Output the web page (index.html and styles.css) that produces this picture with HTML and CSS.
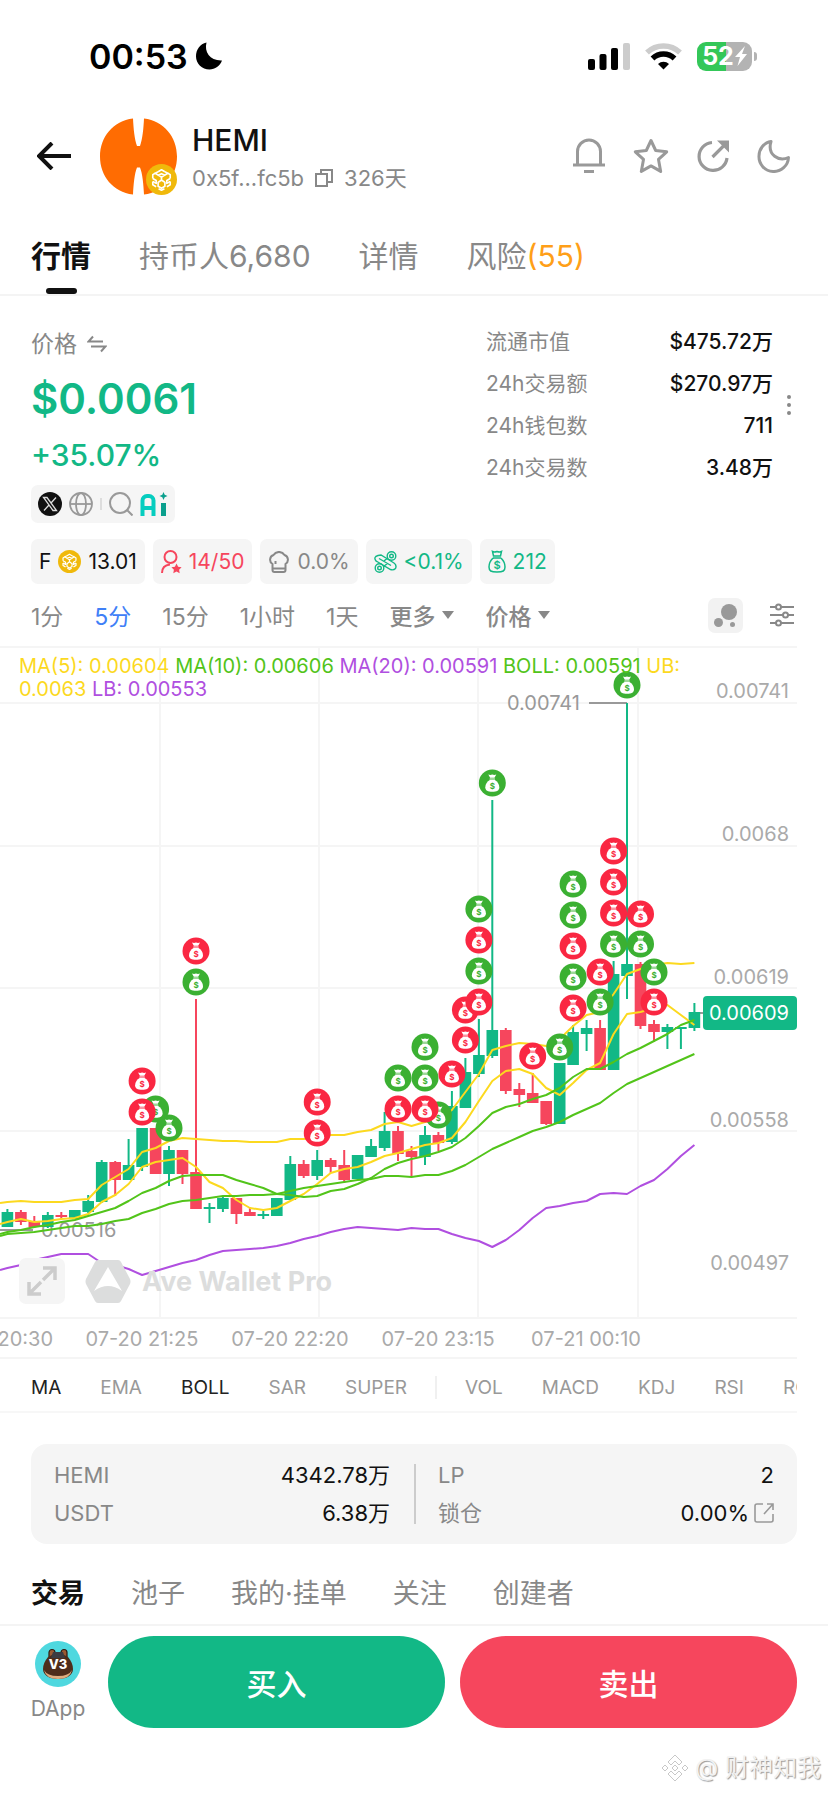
FILE: index.html
```html
<!DOCTYPE html>
<html lang="zh-CN">
<head>
  <meta charset="UTF-8" />
  <meta name="viewport" content="width=device-width, initial-scale=1.0"/>
  <title>HEMI | Ave Wallet Pro</title>
  <link rel="stylesheet" href="styles.css">
</head>
<body>
  <!-- Shared icons -->
  <svg class="sprite" aria-hidden="true">
    <symbol id="bnb" viewBox="0 0 32 32">
      <circle cx="16" cy="16" r="16" fill="#f0b90b"/>
      <g fill="none" stroke="#fff" stroke-width="1.700" stroke-linejoin="round">
        <path d="M12.500 8L16 6l3.500 2M9.500 9.500L7 11v4M22.500 9.500L25 11v4M7 18v3.500l3.500 2M25 18v3.500l-3.500 2M13 25.500l3 1.500 3-1.500"/>
        <path d="M12.500 8L9.500 9.500l3 2 3.500-1.500 3.500 1.500 3-2L19.500 8M12.500 11.500l3.500 2 3.500-2"/>
        <path d="M7 15l3.500 2v3L7 18M25 15l-3.500 2v3l3.500-2M16 13.500v3M12.500 19l3.500-2.500 3.500 2.500v4L16 25l-3.500-2z"/>
      </g>
    </symbol>
    <symbol id="bag" viewBox="-14 -14 28 28">
      <circle r="13.500" fill="currentColor"/>
      <path d="M-4-8.500q2 .8 4 0 2 .8 4 0l-1.800 3.300h-4.400z" fill="#fff"/>
      <rect x="-2.800" y="-4.600" width="5.600" height="1.200" rx=".6" fill="#fff"/>
      <path d="M-2.500-2.900h5C5-1.500 7 1.200 7 4.200 7 7.500 4.500 8.800 0 8.800S-7 7.500-7 4.200c0-3 2-5.700 4.500-7.100z" fill="#fff"/>
      <text y="6" font-size="8" font-weight="700" text-anchor="middle" fill="currentColor">$</text>
    </symbol>
  </svg>

  <!-- Status bar -->
  <div class="status">
    <div class="clock">
      <span>00:53</span>
      <svg width="27" height="28" viewBox="0 0 27 28"><path d="M10.500.5C8 10 14 19 26 18.500 24 24 19 27.500 13.500 27.500 6 27.500 0 21.500 0 14.500 0 7.500 4 2 10.500.5z"/></svg>
    </div>
    <div class="signals">
      <svg width="42" height="27" viewBox="0 0 42 27">
        <rect y="16" width="7" height="11" rx="2"/>
        <rect x="11.500" y="11" width="7" height="16" rx="2"/>
        <rect x="23" y="5" width="7" height="22" rx="2"/>
        <rect x="35" width="7" height="27" rx="2" fill="#ccc"/>
      </svg>
      <svg width="37" height="27" viewBox="0 0 37 27">
        <path d="M2 9.500a24 24 0 0 1 33 0" fill="none" stroke="#ccc" stroke-width="5.500"/>
        <path d="M7.500 15.500a16 16 0 0 1 22 0" fill="none" stroke="#000" stroke-width="5.500"/>
        <path d="M18.500 26.500l-5.500-5.500a8 8 0 0 1 11 0z"/>
      </svg>
      <div class="battery">
        <span class="battery-level">52<svg width="12" height="20" viewBox="0 0 12 20"><path d="M10 0L0 11h5L2.500 20 12 8H7z" fill="#fff"/></svg></span>
        <span class="battery-cap"></span>
      </div>
    </div>
  </div>

  <!-- Token header -->
  <header class="token-header">
    <a class="back" href="#" aria-label="返回">
      <svg width="34" height="28" viewBox="0 0 34 28"><path d="M34 14H2M15 1L2 14l13 13" fill="none" stroke="#111" stroke-width="4"/></svg>
    </a>
    <div class="avatar">
      <svg width="77" height="77" viewBox="0 0 77 77">
        <path d="M33 .5C13 3 0 19 0 38.500S13 74 33 76.500c.5-10 1.500-21 4-27h3c2.500 6 3.500 17 4 27C64 74 77 58 77 38.500S64 3 44 .5c-.5 10-1.500 21-4 27.500h-3c-2.500-6.500-3.500-17.500-4-27.500z" fill="#ff6c02"/>
      </svg>
      <svg class="avatar-chain" width="31" height="31"><use href="#bnb"/></svg>
    </div>
    <div class="token-info">
      <h1>HEMI</h1>
      <div class="token-sub">
        <span>0x5f...fc5b</span>
        <svg width="18" height="18" viewBox="0 0 18 18"><path d="M1 5h11v12H1zM6 5V1h11v12h-5" fill="none" stroke="#888" stroke-width="2"/></svg>
        <span>326天</span>
      </div>
    </div>
    <div class="actions">
      <button aria-label="提醒"><svg width="34" height="36" viewBox="0 0 34 36"><path d="M5.500 26V13.500a11.500 11.500 0 0 1 23 0V26M1 27h32M12 33.500h10" fill="none" stroke="#999" stroke-width="3"/></svg></button>
      <button aria-label="收藏"><svg width="36" height="36" viewBox="0 0 36 36"><path d="M18 2.500l4.700 10 11 1.300-8.200 7.600 2.200 12-9.700-5.500-9.700 5.500 2.200-12-8.200-7.600 11-1.300z" fill="none" stroke="#999" stroke-width="3" stroke-linejoin="round"/></svg></button>
      <button aria-label="分享"><svg width="34" height="34" viewBox="0 0 34 34"><path d="M16 3.500A14 14 0 1 0 31 19M16.500 18L29 5.500" fill="none" stroke="#999" stroke-width="3.200"/><path d="M21 1.500h12v12z" fill="#999"/></svg></button>
      <button aria-label="夜间模式"><svg width="34" height="34" viewBox="0 0 34 34"><path d="M14 2.500C7 3.500 2 10 2 17a14.500 14.500 0 0 0 29.500 1.500C22 23 10 16 14 2.500z" fill="none" stroke="#999" stroke-width="3" stroke-linejoin="round"/></svg></button>
    </div>
  </header>

  <nav class="tabs">
    <a class="active" href="#">行情</a>
    <a href="#">持币人6,680</a>
    <a href="#">详情</a>
    <a href="#">风险<span class="risk">(55)</span></a>
  </nav>

  <!-- Price and stats -->
  <section class="overview">
    <div class="price-box">
      <div class="price-label">价格
        <svg width="20" height="18" viewBox="0 0 20 18"><path d="M6 1.500L1.500 6.500H16M4 11.500h14.500L14 16.500" fill="none" stroke="#888" stroke-width="2"/></svg>
      </div>
      <div class="price">$0.0061</div>
      <div class="change">+35.07%</div>
      <div class="social">
        <svg width="24" height="24" viewBox="0 0 24 24"><circle cx="12" cy="12" r="12" fill="#111"/><path d="M5.500 5.500h3.500l9.500 13H15zM18 5.500l-5.200 5.700M11 13l-5 5.500" fill="none" stroke="#ddd" stroke-width="1.300"/></svg>
        <svg width="24" height="24" viewBox="0 0 24 24"><g fill="none" stroke="#999" stroke-width="1.800"><circle cx="12" cy="12" r="11"/><ellipse cx="12" cy="12" rx="5" ry="11"/><path d="M1 12h22"/></g></svg>
        <span class="bar"></span>
        <svg width="24" height="24" viewBox="0 0 24 24"><g fill="none" stroke="#999" stroke-width="2"><circle cx="11" cy="11" r="10"/><path d="M17.500 17.500l6 6"/></g></svg>
        <svg width="28" height="24" viewBox="0 0 28 24"><path d="M2.500 24V8.500a4.500 4.500 0 0 1 4.500-4.500h2a4.500 4.500 0 0 1 4.500 4.500V24M3 16h10" fill="none" stroke="#06cdbf" stroke-width="4"/><path d="M21 11h5v13h-5z" fill="#0a9f8d"/><path d="M23.500 0l1.200 2.800 2.800 1.200-2.800 1.200-1.200 2.800-1.200-2.800-2.800-1.200 2.800-1.200z" fill="#0a9f8d"/></svg>
      </div>
    </div>
    <dl class="stats">
      <div><dt>流通市值</dt><dd>$475.72万</dd></div>
      <div><dt>24h交易额</dt><dd>$270.97万</dd></div>
      <div><dt>24h钱包数</dt><dd>711</dd></div>
      <div><dt>24h交易数</dt><dd>3.48万</dd></div>
    </dl>
    <button class="more" aria-label="更多数据"><svg width="4" height="20" viewBox="0 0 4 20"><g fill="#888"><circle cx="2" cy="2" r="2"/><circle cx="2" cy="10" r="2"/><circle cx="2" cy="18" r="2"/></g></svg></button>
  </section>

  <div class="chips">
    <div class="chip">F <svg width="23" height="23"><use href="#bnb"/></svg> 13.01</div>
    <div class="chip red">
      <svg width="21" height="24" viewBox="0 0 21 24"><g fill="none" stroke="currentColor" stroke-width="2"><circle cx="9.500" cy="7" r="6"/><path d="M1 23c0-5 3-8 8-8.500"/></g><path d="M15.500 13.500l1.600 3.200 3.500.5-2.500 2.500.6 3.600-3.200-1.700-3.200 1.700.6-3.600-2.500-2.500 3.500-.5z" fill="currentColor"/></svg>
      14/50
    </div>
    <div class="chip gray">
      <svg width="22" height="22" viewBox="0 0 22 22"><g fill="none" stroke="currentColor" stroke-width="2"><path d="M4.500 13A5 5 0 0 1 5.500 4 6.500 6.500 0 0 1 16.500 4a5 5 0 0 1 1 9v6q0 2-2 2h-9q-2 0-2-2zM4.500 17.500h13M7.500 13v-3"/></g></svg>
      0.0%
    </div>
    <div class="chip green">
      <svg width="23" height="22" viewBox="0 0 23 22"><g fill="none" stroke="currentColor" stroke-width="1.400"><circle cx="17.500" cy="5" r="4.300"/><circle cx="17.500" cy="5" r="1.800"/><circle cx="5.500" cy="17" r="4.300"/><circle cx="5.500" cy="17" r="1.800"/><path d="M2 10Q-1 6 4 4.500l3-.5 13 8q3 2 1.500 5.500-2 2-5 1L3 10.500zM13.500 7L10 10M9.500 15.500l4-3M5 7.500l12 7"/></g></svg>
      &lt;0.1%
    </div>
    <div class="chip green">
      <svg width="18" height="23" viewBox="0 0 18 23"><path d="M4.500 1.500q2 1 4.500 0 2.500 1 4.500 0l-1 4.500h-7zM5 8h8M5 8C2 11 1 14 1 17c0 4 2 5 8 5s8-1 8-5c0-3-1-6-4-9" fill="none" stroke="currentColor" stroke-width="1.500"/><text x="9" y="19" font-size="11" font-weight="600" text-anchor="middle" fill="currentColor">$</text></svg>
      212
    </div>
  </div>

  <!-- Timeframes -->
  <div class="frames">
    <button>1分</button>
    <button class="selected">5分</button>
    <button>15分</button>
    <button>1小时</button>
    <button>1天</button>
    <button class="drop">更多</button>
    <button class="drop">价格</button>
    <span class="frame-tools">
      <button class="bubble" aria-label="气泡"><svg width="23" height="23" viewBox="0 0 23 23"><g fill="#999"><circle cx="15" cy="8" r="8"/><circle cx="4.500" cy="18.500" r="4.500"/><circle cx="18.500" cy="20.500" r="2.500"/></g></svg></button>
      <button aria-label="设置"><svg width="24" height="24" viewBox="0 0 24 24"><g fill="#fff" stroke="#888" stroke-width="2"><path d="M0 4h24M0 12h24M0 20h24"/><circle cx="8.500" cy="4" r="2.500"/><circle cx="15.500" cy="12" r="2.500"/><circle cx="8.500" cy="20" r="2.500"/></g></svg></button>
    </span>
  </div>

  <!-- Chart -->
  <section class="chart">
    <svg id="chart" class="chart-svg" viewBox="0 0 797 713"></svg>
    <p class="legend">
      <span class="ma5">MA(5): 0.00604</span>
      <span class="ma10">MA(10): 0.00606</span>
      <span class="ma20">MA(20): 0.00591</span>
      <span class="ma10">BOLL: 0.00591</span>
      <span class="ma5">UB: 0.0063</span>
      <span class="ma20">LB: 0.00553</span>
    </p>
    <div class="brand">
      <button class="expand" aria-label="全屏"><svg width="30" height="30" viewBox="0 0 30 30"><path d="M16 2h12v12M28 2L16 14M2 16v12h12M2 28l12-12" fill="none" stroke="#ccc" stroke-width="3.500"/></svg></button>
      <svg width="46" height="43" viewBox="0 0 46 43"><path fill-rule="evenodd" d="M13 0h20q2 0 3 2l9 17q1 2.500 0 5l-9 17q-1 2-3 2H13q-2 0-3-2L1 24q-1-2.500 0-5l9-17q1-2 3-2zM23 7L9 31q7-5 14-5t14 5z" fill="#dcdddd"/></svg>
      <span>Ave Wallet Pro</span>
    </div>
  </section>

  <div class="indicators">
    <button class="on">MA</button>
    <button>EMA</button>
    <button class="on">BOLL</button>
    <button>SAR</button>
    <button>SUPER</button>
    <span class="split"></span>
    <button>VOL</button>
    <button>MACD</button>
    <button>KDJ</button>
    <button>RSI</button>
    <button>ROC</button>
  </div>

  <!-- Pool -->
  <section class="pool">
    <dl>
      <div><dt>HEMI</dt><dd>4342.78万</dd></div>
      <div><dt>USDT</dt><dd>6.38万</dd></div>
    </dl>
    <dl>
      <div><dt>LP</dt><dd>2</dd></div>
      <div><dt>锁仓</dt><dd>0.00%<svg width="20" height="20" viewBox="0 0 20 20"><path d="M9 1H3Q1 1 1 3v14q0 2 2 2h14q2 0 2-2v-6M13 1h6v6M19 1l-9 10" fill="none" stroke="#999" stroke-width="1.600"/></svg></dd></div>
    </dl>
  </section>

  <nav class="subtabs">
    <a class="active" href="#">交易</a>
    <a href="#">池子</a>
    <a href="#">我的·挂单</a>
    <a href="#">关注</a>
    <a href="#">创建者</a>
  </nav>

  <footer class="trade-bar">
    <a class="dapp" href="#">
      <svg width="46" height="46" viewBox="0 0 46 46">
        <circle cx="23" cy="23" r="23" fill="#4fd8df"/>
        <g stroke="#2b1b12" stroke-width="1.200"><rect x="14" y="8.500" width="6" height="12" rx="3" fill="#9a5a32"/><rect x="26" y="8.500" width="6" height="12" rx="3" fill="#9a5a32"/></g>
        <path d="M13 16q10-7 20 0 5 6 5 12c0 6-6 10-15 10S8 34 8 28q0-6 5-12z" fill="#4e2d1b"/>
        <path d="M9 29q3 6 14 6t14-6q-2 9-14 9T9 29z" fill="#dfae80"/>
        <path d="M10 29q4 5 13 5t13-5v-6H10z" fill="#4e2d1b"/>
        <path d="M18 11h10l2 6H16z" fill="#3c3c42"/>
        <text x="23" y="28" font-size="13" font-weight="800" text-anchor="middle" fill="#fff">V3</text>
      </svg>
      DApp
    </a>
    <button class="buy">买入</button>
    <button class="sell">卖出</button>
  </footer>

  <div class="credit">
    <svg width="28" height="28" viewBox="0 0 28 28"><g fill="#fff" stroke="#c8c8c8" stroke-width="1"><path d="M14 1l7 7-3 3-4-4-4 4-3-3zM14 27l7-7-3-3-4 4-4-4-3 3zM14 11l3 3-3 3-3-3zM4 11l3 3-3 3-3-3zM24 11l3 3-3 3-3-3z"/></g></svg>
    <span>@ 财神知我</span>
  </div>

  <script src="chart.js"></script>
</body>
</html>
```
FILE: styles.css
```css
* {
  box-sizing: border-box;
}
body {
  font-family: Inter, "Noto Sans CJK SC", sans-serif;
  background: #fff;
  color: #111;
  margin: 0;
}
button {
  background: none;
  border: none;
  padding: 0;
  margin: 0;
  font: inherit;
  color: inherit;
  cursor: pointer;
}
a {
  color: inherit;
  text-decoration: none;
}
dl, dd, h1, p {
  margin: 0;
}
svg {
  display: block;
  flex-shrink: 0;
}
.sprite {
  position: absolute;
  width: 0;
  height: 0;
}

/* status bar */
.status {
  display: flex;
  justify-content: space-between;
  align-items: center;
  height: 114px;
  padding: 0 71px 2px 89px;
  color: #000;
}
.clock {
  display: flex;
  align-items: center;
  gap: 8px;
  font-size: 34px;
  font-weight: 600;
}
.signals {
  display: flex;
  align-items: center;
  gap: 15px;
}
.battery {
  display: flex;
  align-items: center;
  gap: 2px;
}
.battery-level {
  display: flex;
  align-items: center;
  justify-content: center;
  gap: 1px;
  width: 55px;
  height: 29px;
  border-radius: 9px;
  background: linear-gradient(to right, #34c759 52%, #b3b3b3 52%);
  color: #fff;
  font-size: 25px;
  font-weight: 700;
}
.battery-cap {
  width: 3px;
  height: 9px;
  border-radius: 0 3px 3px 0;
  background: #b3b3b3;
}

/* token header */
.token-header {
  display: flex;
  align-items: center;
  height: 84px;
  padding: 0 37px;
}
.avatar {
  position: relative;
  margin: 0 15px 0 29px;
}
.avatar-chain {
  position: absolute;
  right: 0;
  bottom: 0;
}
.token-info {
  padding-top: 6px;
}
.token-info h1 {
  font-size: 30px;
  line-height: 38px;
  font-weight: 500;
}
.token-sub {
  display: flex;
  align-items: center;
  gap: 11px;
  font-size: 22px;
  line-height: 38px;
  color: #888;
}
.actions {
  display: flex;
  align-items: center;
  gap: 27px;
  margin-left: auto;
}

/* main tabs */
.tabs {
  display: flex;
  gap: 48px;
  height: 98px;
  padding: 0 31px;
  border-bottom: 2px solid #f4f4f4;
  font-size: 30px;
  line-height: 116px;
  color: #888;
}
.tabs .active {
  position: relative;
  color: #111;
  font-weight: 600;
}
.tabs .active::after {
  content: "";
  position: absolute;
  left: 50%;
  bottom: 0;
  width: 31px;
  height: 6px;
  margin-left: -15px;
  border-radius: 3px;
  background: #111;
}
.risk {
  color: #ff9f18;
}

/* price and stats */
.overview {
  display: flex;
  align-items: flex-start;
  padding: 25px 31px 0;
}
.price-box {
  flex: 1;
}
.price-label {
  display: flex;
  align-items: center;
  gap: 10px;
  font-size: 23px;
  line-height: 46px;
  color: #888;
}
.price {
  font-size: 42px;
  line-height: 64px;
  font-weight: 600;
  color: #12b886;
}
.change {
  font-size: 30px;
  line-height: 48px;
  font-weight: 500;
  color: #12b886;
}
.social {
  display: inline-flex;
  align-items: center;
  gap: 7px;
  height: 38px;
  margin-top: 6px;
  padding: 0 7px;
  border-radius: 7px;
  background: #f5f5f5;
}
.bar {
  width: 2px;
  height: 12px;
  background: #ddd;
}
.stats {
  width: 287px;
}
.stats div {
  display: flex;
  justify-content: space-between;
  font-size: 21px;
  line-height: 42px;
}
.stats dt {
  color: #888;
}
.stats dd {
  font-weight: 500;
}
.more {
  align-self: flex-start;
  margin: 74px 6px 0 14px;
}

/* info chips */
.chips {
  display: flex;
  gap: 8px;
  padding: 16px 31px 0;
}
.chip {
  display: flex;
  align-items: center;
  gap: 7px;
  height: 45px;
  padding: 0 8px;
  border-radius: 7px;
  background: #f5f5f5;
  font-size: 21px;
}
.chip.red { color: #f6465d; }
.chip.gray { color: #888; }
.chip.green { color: #12b886; }

/* timeframes */
.frames {
  display: flex;
  align-items: center;
  gap: 31px;
  height: 62px;
  padding: 0 34px 0 31px;
  font-size: 23px;
  color: #888;
}
.frames .selected {
  color: #3f80f7;
}
.drop {
  display: flex;
  align-items: center;
  gap: 7px;
  font-weight: 500;
}
.drop::after {
  content: "";
  border: 6px solid transparent;
  border-top: 8px solid #888;
  border-bottom: 0;
}
.frame-tools {
  display: flex;
  align-items: center;
  gap: 27px;
  margin-left: auto;
}
.bubble {
  padding: 6px;
  border-radius: 7px;
  background: #f2f2f2;
}

/* chart */
.chart {
  position: relative;
  margin-right: 31px;
}
.chart-svg {
  width: 100%;
  height: auto;
  font-size: 20px;
}
.grid { stroke: #f5f5f5; stroke-width: 2; }
.axis { fill: #aaa; }
.mark { fill: #999; }
.mark-line { stroke: #999; stroke-width: 2; }
.line { fill: none; stroke-width: 2; stroke-linejoin: round; }
.yellow { stroke: #fcd91f; }
.lime { stroke: #52c41a; }
.purple { stroke: #b04fe0; }
.up { fill: #12b886; stroke: #12b886; }
.down { fill: #f6465d; stroke: #f6465d; }
.buy-bag { color: #3bb032; }
.sell-bag { color: #fa2742; }
.tag { fill: #12b886; }
.tag-text { fill: #fff; }
.legend {
  position: absolute;
  top: 9px;
  left: 19px;
  right: 90px;
  font-size: 20px;
  line-height: 23px;
}
.ma5 { color: #fcd91f; }
.ma10 { color: #52c41a; }
.ma20 { color: #b04fe0; }
.brand {
  position: absolute;
  left: 19px;
  bottom: 55px;
  display: flex;
  align-items: center;
  font-size: 27px;
  font-weight: 700;
  color: #dcdddd;
}
.brand span {
  margin-left: 11px;
}
.expand {
  margin-right: 20px;
  padding: 8px;
  border-radius: 7px;
  background: #f5f5f5;
}

/* indicators */
.indicators {
  display: flex;
  align-items: center;
  gap: 39px;
  height: 54px;
  margin-right: 31px;
  padding: 4px 0 0 31px;
  overflow: hidden;
  border-bottom: 2px solid #f7f7f7;
  font-size: 19px;
  color: #999;
}
.indicators .on {
  color: #222;
}
.split {
  flex-shrink: 0;
  width: 2px;
  height: 23px;
  margin: 0 -11px;
  background: #f0f0f0;
}

/* pool card */
.pool {
  display: flex;
  margin: 31px 31px 0;
  padding: 12px 23px;
  border-radius: 16px;
  background: #f5f5f5;
  font-size: 22px;
}
.pool dl {
  flex: 1;
}
.pool dl + dl {
  margin-left: 24px;
  padding-left: 24px;
  background: linear-gradient(#ccc, #ccc) left center / 2px 60px no-repeat;
}
.pool div {
  display: flex;
  justify-content: space-between;
  line-height: 38px;
}
.pool dt {
  color: #888;
}
.pool dd {
  display: flex;
  align-items: center;
  gap: 5px;
}

/* lower tabs */
.subtabs {
  display: flex;
  gap: 46px;
  height: 82px;
  padding: 0 31px;
  border-bottom: 2px solid #f4f4f4;
  font-size: 27px;
  line-height: 100px;
  color: #888;
}
.subtabs .active {
  color: #111;
  font-weight: 600;
}

/* buy / sell */
.trade-bar {
  display: flex;
  align-items: center;
  gap: 15px;
  padding: 10px 31px 0;
}
.dapp {
  display: flex;
  flex-direction: column;
  align-items: center;
  gap: 8px;
  width: 62px;
  margin-left: -4px;
  margin-right: 4px;
  font-size: 21px;
  line-height: 28px;
  color: #888;
}
.buy, .sell {
  flex: 1;
  height: 92px;
  border-radius: 46px;
  color: #fff;
  font-size: 30px;
  font-weight: 500;
}
.buy { background: #12b886; }
.sell { background: #f6465d; }

.credit {
  display: flex;
  justify-content: flex-end;
  align-items: center;
  gap: 6px;
  margin-top: 22px;
  padding: 0 7px 5px 0;
  font-size: 24px;
  line-height: 36px;
  color: #f2f2f2;
  text-shadow: 1px 1px 1px #999;
}
```
FILE: chart.js
```js
const svg = document.getElementById("chart");
const step = 13.47;
const x = (i) => Math.round((7.4 + i * step) * 10) / 10;

// direction, high, body top, body bottom, low
const candles = [
  ["up", 563, 566, 581, 581], ["down", 564, 566, 576, 579], ["down", 570, 575, 581, 582],
  ["up", 566, 569, 581, 582], ["down", 566, 569, 571, 573], ["up", 564, 564, 573, 573],
  ["up", 549, 555, 566, 567], ["up", 514, 516, 556, 557], ["down", 515, 516, 534, 550],
  ["up", 493, 519, 534, 534], ["up", 482, 482, 521, 525], ["down", 482, 482, 528, 528],
  ["up", 500, 504, 528, 540], ["down", 504, 504, 528, 538], ["down", 353, 526, 563, 563],
  ["up", 557, 561, 563, 577], ["up", 550, 552, 563, 566], ["down", 552, 552, 568, 578],
  ["down", 562, 566, 570, 570], ["up", 565, 568, 570, 573], ["up", 552, 552, 570, 570],
  ["up", 510, 518, 554, 554], ["down", 514, 518, 530, 532], ["up", 504, 514, 530, 534],
  ["down", 512, 514, 521, 527], ["down", 504, 519, 534, 537], ["up", 509, 509, 533, 533],
  ["up", 493, 500, 511, 511], ["up", 466, 485, 502, 505], ["down", 480, 485, 508, 515],
  ["down", 500, 505, 511, 531], ["up", 480, 489, 511, 519], ["down", 486, 489, 497, 505],
  ["up", 445, 460, 496, 498], ["up", 412, 426, 462, 462], ["up", 373, 409, 428, 431],
  ["up", 154, 384, 410, 412], ["down", 382, 384, 445, 448], ["down", 437, 443, 449, 461],
  ["down", 427, 447, 457, 457], ["down", 455, 455, 478, 479], ["up", 417, 417, 478, 478],
  ["up", 379, 386, 419, 419], ["up", 374, 382, 388, 405], ["down", 374, 382, 424, 424],
  ["up", 315, 328, 424, 424], ["up", 57, 318, 330, 353], ["down", 316, 318, 380, 383],
  ["down", 374, 378, 386, 396], ["up", 378, 381, 386, 403], ["up", 381, 381, 383, 403],
  ["up", 357, 366, 382, 385]
];

// the first value of each line sits on the left edge, the rest on the candles
const lines = {
  upper: ["yellow", [557, 556, 555, 556, 556, 556, 554, 553, 539, 531, 523, 506, 502, 495, 492, 493, 494, 495, 495, 496, 496, 496, 493, 493, 491, 489, 489, 486, 484, 478, 476, 480, 476, 474, 464, 446, 428, 404, 400, 397, 398, 400, 393, 380, 369, 366, 348, 328, 323, 319, 317, 318, 317]],
  ma5: ["yellow", [578, 576, 573, 576, 575, 573, 572, 568, 556, 549, 538, 521, 516, 514, 512, 521, 536, 542, 554, 562, 564, 562, 555, 548, 538, 527, 523, 521, 516, 510, 507, 503, 499, 497, 492, 476, 455, 435, 425, 423, 428, 442, 449, 437, 424, 417, 388, 368, 366, 362, 359, 369, 379]],
  ma10: ["lime", [588, 586, 584, 581, 579, 576, 574, 570, 566, 562, 555, 547, 542, 535, 530, 529, 529, 529, 534, 538, 542, 548, 549, 551, 550, 545, 543, 538, 532, 523, 517, 513, 510, 506, 501, 492, 480, 467, 461, 458, 453, 449, 442, 431, 423, 423, 416, 408, 402, 395, 388, 379, 374]],
  ma20: ["lime", [590, 588, 587, 586, 584, 582, 580, 580, 578, 575, 573, 567, 563, 558, 555, 554, 552, 550, 550, 549, 549, 548, 545, 542, 540, 538, 536, 534, 533, 530, 530, 531, 529, 529, 525, 519, 511, 503, 497, 491, 485, 481, 476, 469, 463, 457, 447, 438, 432, 426, 420, 414, 408]],
  lower: ["purple", [624, 622, 619, 614, 611, 608, 608, 608, 617, 619, 623, 629, 625, 621, 617, 614, 609, 605, 604, 603, 602, 600, 597, 593, 590, 586, 583, 581, 582, 583, 584, 582, 583, 583, 588, 592, 595, 601, 594, 584, 572, 562, 560, 557, 555, 548, 547, 548, 540, 534, 523, 510, 499]]
};

// candle index, y, side
const bags = [
  [14, 305, "sell"], [14, 336, "buy"], [11, 463, "buy"], [10, 435, "sell"], [10, 466, "sell"],
  [12, 482, "buy"], [23, 456, "sell"], [23, 487, "sell"], [29, 432, "buy"], [29, 463, "sell"],
  [32, 469, "buy"], [31, 401, "buy"], [31, 432, "buy"], [31, 463, "sell"], [33, 428, "sell"],
  [34, 364, "sell"], [34, 394, "sell"], [35, 263, "buy"], [35, 294, "sell"], [35, 325, "buy"],
  [35, 356, "sell"], [36, 137, "buy"], [39, 410, "sell"], [41, 401, "buy"], [42, 238, "buy"],
  [42, 269, "buy"], [42, 300, "sell"], [42, 331, "buy"], [42, 362, "sell"], [44, 326, "sell"],
  [44, 356, "buy"], [45, 205, "sell"], [45, 236, "sell"], [45, 267, "sell"], [45, 298, "buy"],
  [46, 39, "buy"], [47, 268, "sell"], [47, 298, "buy"], [48, 326, "buy"], [48, 356, "sell"]
];

const prices = [["0.00741", 52], ["0.0068", 195], ["0.00619", 338], ["0.00558", 481], ["0.00497", 624]];
const times = [["07-20 20:30", -6], ["07-20 21:25", 142], ["07-20 22:20", 290], ["07-20 23:15", 438], ["07-21 00:10", 586]];

let out = "";

[1, 57, 200, 342, 485, 672, 712].forEach((y) => {
  out += `<path class="grid" d="M0 ${y}H797"/>`;
});
[160, 319, 478, 638].forEach((gx) => {
  out += `<path class="grid" d="M${gx} 0V672"/>`;
});

out += `<path class="mark-line" d="M0 584H33M589 57H627M700 367H704"/>`;
out += `<text class="mark" x="41" y="591">0.00516</text>`;
out += `<text class="mark" x="580" y="64" text-anchor="end">0.00741</text>`;

candles.forEach(([dir, high, top, bottom, low], i) => {
  out += `<path class="${dir}" stroke-width="2" d="M${x(i)} ${high}V${low}"/>`;
  out += `<rect class="${dir}" stroke-width="0" x="${x(i) - 5.8}" y="${top}" width="11.600" height="${bottom - top}"/>`;
});

Object.values(lines).forEach(([color, values]) => {
  const points = values.map((y, i) => `${i === 0 ? 0 : x(i - 1)},${y}`).join(" ");
  out += `<polyline class="line ${color}" points="${points}"/>`;
});

bags.forEach(([i, y, side]) => {
  out += `<use href="#bag" class="${side}-bag" x="${x(i) - 14}" y="${y - 14}" width="28" height="28"/>`;
});

prices.forEach(([label, y]) => {
  out += `<text class="axis" x="789" y="${y}" text-anchor="end">${label}</text>`;
});
times.forEach(([label, tx]) => {
  out += `<text class="axis" x="${tx}" y="700" text-anchor="middle">${label}</text>`;
});

out += `<rect class="tag" x="703" y="350" width="94" height="34" rx="4"/>`;
out += `<text class="tag-text" x="789" y="374" text-anchor="end">0.00609</text>`;

svg.innerHTML = out;
```
